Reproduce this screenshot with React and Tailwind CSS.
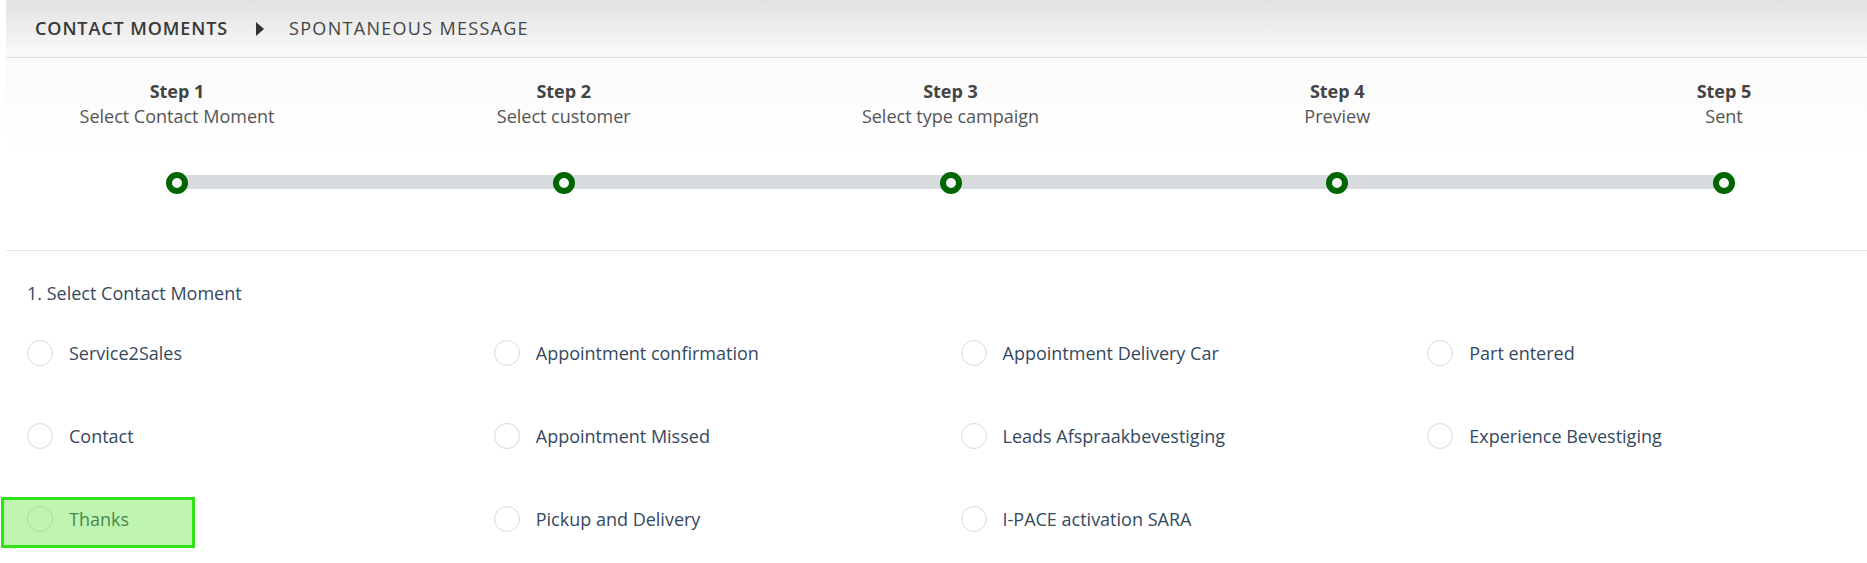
import React from "react";

const steps = [
  { title: "Step 1", label: "Select Contact Moment" },
  { title: "Step 2", label: "Select customer" },
  { title: "Step 3", label: "Select type campaign" },
  { title: "Step 4", label: "Preview" },
  { title: "Step 5", label: "Sent" },
];

const moments = [
  "Service2Sales",
  "Appointment confirmation",
  "Appointment Delivery Car",
  "Part entered",
  "Contact",
  "Appointment Missed",
  "Leads Afspraakbevestiging",
  "Experience Bevestiging",
  "Thanks",
  "Pickup and Delivery",
  "I-PACE activation SARA",
];

function Radio({ label, highlighted }) {
  return (
    <div className="relative flex h-[50px] items-center pl-[27px]">
      <span className="h-[26px] w-[26px] shrink-0 rounded-full border border-[#d6d9dc] bg-white" />
      <span className="ml-[16px] text-[18px] text-[#34495e]">{label}</span>
      {highlighted && (
        <div className="absolute left-[1px] top-[3px] h-[51px] w-[194px] border-[3px] border-[#2fe314] bg-[#5fe63a]/40" />
      )}
    </div>
  );
}

export default function App() {
  return (
    <div className="min-h-screen bg-white font-['Open_Sans',sans-serif]">
      <div className="pl-[6px]">
        {/* Breadcrumb */}
        <div className="flex h-[58px] items-center border-b border-[#dcdcdc] bg-gradient-to-b from-[#e2e2e2] to-[#fafafa] pl-[29px] text-[18px] uppercase">
          <span className="font-semibold tracking-[0.9px] text-[#383838]">Contact Moments</span>
          <span className="ml-[28px] mr-[25px] h-0 w-0 border-y-[7px] border-l-[8px] border-y-transparent border-l-[#333]" />
          <span className="tracking-[1.3px] text-[#444]">Spontaneous Message</span>
        </div>

        {/* Stepper */}
        <div className="border-b border-[#e8e8e8] bg-gradient-to-b from-[#fafafa] via-white to-white pb-[56px] pt-[21px]">
          <div className="relative flex justify-between pl-[31px] pr-[3px]">
            <div className="absolute left-[171px] right-[137px] top-[96px] h-[14px] bg-[#d8dcdf]" />
            {steps.map((s) => (
              <div key={s.title} className="relative flex w-[280px] flex-col items-center text-[18px]">
                <span className="font-bold leading-[25px] text-[#444]">{s.title}</span>
                <span className="leading-[25px] text-[#555]">{s.label}</span>
                <span className="mt-[43px] h-[22px] w-[22px] rounded-full border-[6px] border-[#006600] bg-[#f5f5f5]" />
              </div>
            ))}
          </div>
        </div>
      </div>

      {/* Contact moments */}
      <div className="pt-[30px]">
        <p className="pl-[27px] text-[18px] leading-[24px] text-[#34495e]">1. Select Contact Moment</p>
        <div className="mt-[23px] grid grid-cols-4 gap-y-[33px]">
          {moments.map((m) => (
            <Radio key={m} label={m} highlighted={m === "Thanks"} />
          ))}
        </div>
      </div>
    </div>
  );
}
